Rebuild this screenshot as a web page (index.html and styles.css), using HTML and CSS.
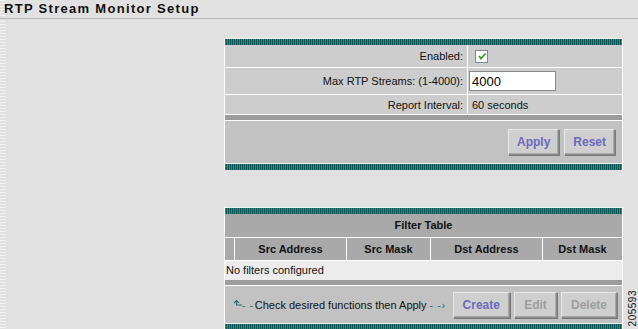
FILE: index.html
```html
<!DOCTYPE html>
<html lang="en">
<head>
    <meta charset="UTF-8">
    <title>RTP Stream Monitor Setup</title>
    <link rel="stylesheet" href="styles.css">
</head>
<body>
    <div class="title">RTP Stream Monitor Setup</div>
    <div class="main">
        <div class="panels">
            <!-- settings -->
            <div class="panel">
                <div class="stripe"></div>
                <div class="row row-enabled">
                    <div class="label">Enabled:</div>
                    <div class="value">
                        <span class="check">
                            <svg width="10" height="10" viewBox="0 0 10 10"><path d="M2 5 L4 7.5 L8.5 2.5" fill="none" stroke="#3a9a2a" stroke-width="1.8"/></svg>
                        </span>
                    </div>
                </div>
                <div class="row row-max">
                    <div class="label">Max RTP Streams: (1-4000):</div>
                    <div class="value"><input class="field" type="text" value="4000"></div>
                </div>
                <div class="row row-interval">
                    <div class="label">Report Interval:</div>
                    <div class="value">60 seconds</div>
                </div>
                <div class="divider"></div>
                <div class="actions">
                    <button class="btn">Apply</button>
                    <button class="btn">Reset</button>
                </div>
                <div class="stripe"></div>
            </div>

            <!-- filters -->
            <div class="panel filter">
                <div class="stripe"></div>
                <div class="caption">Filter Table</div>
                <div class="cols">
                    <div class="col col-sel"></div>
                    <div class="col col-src">Src Address</div>
                    <div class="col col-mask">Src Mask</div>
                    <div class="col col-dst">Dst Address</div>
                    <div class="col col-dmask">Dst Mask</div>
                </div>
                <div class="empty">No filters configured</div>
                <div class="divider"></div>
                <div class="actions">
                    <span class="hint">
                        <svg class="up" width="9" height="9" viewBox="0 0 9 9"><path d="M1 4 L3.5 1.5 L6 4 M3.5 2 V6 H9" fill="none" stroke="#2b6f6f" stroke-width="1.1"/></svg><span class="arrow">- -</span>Check desired functions then Apply <span class="arrow">- -&#x203A;</span>
                    </span>
                    <button class="btn">Create</button>
                    <button class="btn btn-edit" disabled>Edit</button>
                    <button class="btn" disabled>Delete</button>
                </div>
                <div class="stripe"></div>
            </div>
        </div>
        <div class="figno">205593</div>
    </div>
</body>
</html>
```

FILE: styles.css
```css
body {
    margin: 0;
    background: repeating-linear-gradient(180deg, #f2f2f2 0 1px, #e1e1e1 1px 3px) no-repeat 0 0 / 6px 100%, #e1e1e1;
    font-family: "Liberation Sans", Arial, sans-serif;
    font-size: 11px;
    color: #111;
    height: 329px;
    overflow: hidden;
}
.title {
    height: 18px;
    line-height: 18px;
    padding-left: 4px;
    font-size: 13px;
    font-weight: bold;
    letter-spacing: 1.3px;
    color: #111;
    border-bottom: 1px solid #b8b8b8;
}
.main {
    display: flex;
    padding-left: 224px;
    padding-top: 19px;
}
.panels {
    width: 400px;
}
.panel {
    border-left: 1px solid #fff;
    border-right: 1px solid #fff;
    background-color: #cdcdcd;
}
.filter {
    margin-top: 37px;
}
.stripe {
    height: 6px;
    border-top: 1px solid #eaf2f2;
    background: repeating-linear-gradient(90deg, #2a8a8a 0 1px, #0d5656 1px 2px);
}
.row {
    display: flex;
    border-bottom: 1px solid #fff;
}
.label {
    width: 238px;
    padding-right: 4px;
    text-align: right;
    border-right: 1px solid #fff;
    display: flex;
    align-items: center;
    justify-content: flex-end;
}
.value {
    display: flex;
    align-items: center;
    padding-left: 4px;
}
.row-enabled {
    height: 22px;
}
.row-max {
    height: 26px;
}
.row-interval {
    height: 19px;
}
.check {
    width: 11px;
    height: 11px;
    margin-left: 3px;
    border: 1px solid #7a8a9a;
    background-color: #fff;
    display: flex;
    align-items: center;
    justify-content: center;
}
.field {
    width: 81px;
    height: 16px;
    margin-left: -3px;
    padding: 1px 2px;
    border: 1px solid #8a8a8a;
    font-family: "Liberation Sans", Arial, sans-serif;
    font-size: 13px;
    color: #000;
}
.divider {
    height: 5px;
    background-color: #9c9c9c;
    border-bottom: 1px solid #fff;
}
.actions {
    display: flex;
    align-items: center;
    justify-content: flex-end;
    gap: 5px;
    height: 42px;
    padding-right: 7px;
    background-color: #c2c2c2;
}
.btn {
    height: 26px;
    padding: 0 8px;
    border: 1px solid #8c8c8c;
    border-top-color: #e8e8e8;
    border-left-color: #e8e8e8;
    box-shadow: inset -1px -1px 0 #a8a8a8, 1px 1px 0 #777;
    background-color: #cfcfcf;
    font-family: "Liberation Sans", Arial, sans-serif;
    font-size: 12px;
    font-weight: bold;
    color: #6a6abd;
}
.btn:disabled {
    color: #9e9e9e;
}
.caption {
    height: 23px;
    line-height: 23px;
    text-align: center;
    font-weight: bold;
    background-color: #a9a9a9;
    border-bottom: 1px solid #fff;
}
.cols {
    display: flex;
    height: 22px;
    background-color: #a9a9a9;
    border-bottom: 1px solid #fff;
    font-weight: bold;
}
.col {
    display: flex;
    align-items: center;
    justify-content: center;
    border-right: 1px solid #fff;
}
.col-sel {
    width: 9px;
}
.col-src {
    width: 111px;
}
.col-mask {
    width: 83px;
}
.col-dst {
    width: 111px;
}
.col-dmask {
    flex: 1;
    border-right: none;
}
.empty {
    height: 19px;
    line-height: 19px;
    padding-left: 1px;
    background-color: #ececec;
}
.filter .actions {
    height: 37px;
    gap: 4px;
    padding-right: 5px;
}
.filter .btn {
    padding: 0 9px;
}
.filter .btn-edit {
    width: 43px;
}
.hint {
    display: flex;
    align-items: center;
    margin-right: 3px;
    font-size: 11px;
}
.arrow {
    color: #2b6f6f;
    letter-spacing: 0.5px;
}
.hint .arrow:first-of-type {
    margin-right: 1px;
}
.hint .arrow:last-of-type {
    margin-left: 3px;
}
.up {
    margin-bottom: 3px;
}
.figno {
    align-self: flex-end;
    margin-left: 4px;
    margin-bottom: 4px;
    writing-mode: vertical-rl;
    transform: rotate(180deg);
    font-size: 10px;
    letter-spacing: 0.5px;
    color: #111;
}
```
